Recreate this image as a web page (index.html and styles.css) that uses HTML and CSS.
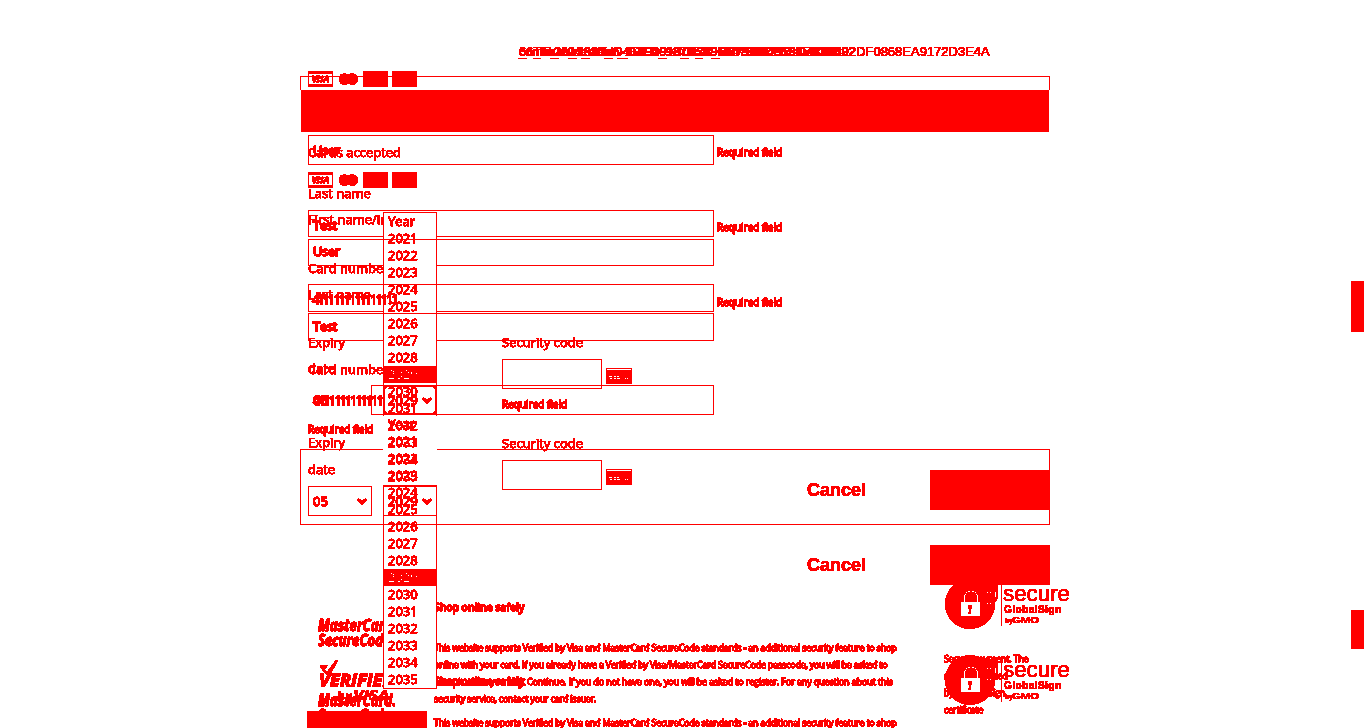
FILE: index.html
```
<!DOCTYPE html>
<html lang="en">
<head>
<meta charset="utf-8">
<title>Card payment</title>
<link rel="stylesheet" href="styles.css">
</head>
<body>
<svg class="defs" width="0" height="0">
  <filter id="ink" x="0" y="0" width="100%" height="100%" color-interpolation-filters="sRGB">
    <feComponentTransfer>
      <feFuncG type="discrete" tableValues="0 0 0 0 0 0 0 0 0 0 0 0 0 0 0 0 0 0 0 1"/>
      <feFuncB type="discrete" tableValues="0 0 0 0 0 0 0 0 0 0 0 0 0 0 0 0 0 0 0 1"/>
    </feComponentTransfer>
  </filter>
  <symbol id="cards" viewBox="0 0 109 16">
    <path d="M0 0h25v16H0zM1 3v10h23V3z" fill-rule="evenodd"/>
    <text x="4" y="11" class="visa-mark" textLength="17" lengthAdjust="spacingAndGlyphs">VISA</text>
    <circle cx="36.5" cy="8" r="5.6"/><circle cx="44.3" cy="8" r="5.6"/><path d="M38 3h5v10h-5z"/>
    <path d="M55 0h25v16H55zM84 0h25v16H84z"/>
  </symbol>
  <symbol id="cvv" viewBox="0 0 26 17">
    <rect width="26" height="16" rx="1"/>
    <path d="M1 1.5h24M3 8.500h3M8 8.500h2M11 8.500h2M4 10.500h2M8 10.500h2M11 10.500h3M19 10.500h1M21 10.500h1" stroke="#fff"/>
  </symbol>
  <symbol id="chevron" viewBox="0 0 10 7"><path d="M1 1.2l4 3.9 4-3.9" fill="none" stroke="#f00" stroke-width="2.2"/></symbol>
  <symbol id="seal" viewBox="0 0 128 52">
    <circle cx="26" cy="25" r="24.700"/>
    <path d="M38 4h16v13q0 5-6 7z"/>
    <path d="M43 13.500h1M46 13.500h1M43 24.500h1M46 24.500h1M51.500 13v5" stroke="#fff"/>
    <path d="M17 23h19v14H17z" fill="#fff"/>
    <path d="M20.500 23v-4c0-9.500 13-9.500 13 0v4" fill="none" stroke="#fff" stroke-width="1.500"/>
    <path d="M24 26h4v4h-1v5h-3v-2h1v-3h-1z"/>
    <path d="M57 5h1v42h-1z"/>
    <text x="59" y="22" class="seal-name" textLength="67" lengthAdjust="spacingAndGlyphs">secure</text>
    <text x="60" y="34" class="seal-brand" textLength="57">GlobalSign</text>
    <text x="61" y="44" class="seal-by" textLength="8">by</text>
    <text x="68" y="44" class="seal-gmo" textLength="27" lengthAdjust="spacingAndGlyphs">GMO</text>
  </symbol>
  <symbol id="securecode" viewBox="0 0 82 34">
    <text x="0" y="14.500" class="mark" textLength="78" lengthAdjust="spacingAndGlyphs">MasterCard.</text>
    <text x="0" y="29.500" class="mark" textLength="76" lengthAdjust="spacingAndGlyphs">SecureCode.</text>
  </symbol>
  <symbol id="verified" viewBox="0 0 82 44">
    <path d="M2 6l8-1-4 5 3 2 9-12h2L12 15H9L5 11z"/>
    <text x="1" y="26" class="mark" textLength="76" lengthAdjust="spacingAndGlyphs">VERIFIED</text>
    <text x="20" y="40" class="mark-by" textLength="14">by</text>
    <text x="35" y="40" class="mark-visa" textLength="36" lengthAdjust="spacingAndGlyphs">VISA</text>
  </symbol>
</svg>
<main class="stage">
  <section class="layer reference">
    <div class="token">_6_Ti_m_2681_6_D4E0910_0_C_0B7968D8594E93B492DF0868EA9172D3E4A</div>
    <div class="token second">continue-identifier_1DEC_937953CF7473834318950000</div>
    <div class="token third">6nTim2604_dentD4E29101C0837958D87942921D4335022</div>
  </section>
  <section class="layer frames">
    <div class="frame frame-top"></div>
    <div class="banner"></div>
    <div class="frame frame-bottom"></div>
  </section>
  <section class="layer fields">
    <div class="field f1">User</div>
    <div class="field f2">Test</div>
    <div class="field f3">User</div>
    <div class="field f4"></div>
    <div class="field f5">Test</div>
    <div class="field f6"></div>
  </section>
  <section class="layer labels">
    <svg class="card-logos logos1"><use href="#cards"/></svg>
    <div class="label l1">Cards accepted</div>
    <svg class="card-logos logos2"><use href="#cards"/></svg>
    <div class="label l2">Last name</div>
    <div class="label l3">First name/Initial</div>
    <div class="label l4">Card number</div>
    <div class="label l5">Last name</div>
    <div class="label l6">Expiry</div>
    <div class="label l7">Card number</div>
    <div class="label l8">date</div>
    <div class="value number n2">4111111111111111</div>
    <div class="value v05">05</div>
    <div class="required l9">Required field</div>
    <div class="label l10">Expiry</div>
    <div class="label l11">date</div>
    <div class="select month"><span>05</span><svg><use href="#chevron"/></svg></div>
  </section>
  <section class="layer hints">
    <div class="required">Required field</div>
    <div class="required">Required field</div>
    <div class="required">Required field</div>
  </section>
  <section class="layer security">
    <div class="label">Security code</div>
    <div class="code-row"><div class="code-box"></div><svg><use href="#cvv"/></svg></div>
    <div class="required">Required field</div>
    <div class="label again">Security code</div>
    <div class="code-row"><div class="code-box"></div><svg><use href="#cvv"/></svg></div>
  </section>
  <section class="layer actions">
    <div class="action-row"><span>Cancel</span><div class="button"></div></div>
    <div class="action-row"><span>Cancel</span><div class="button"></div></div>
  </section>
  <section class="layer brand-marks">
    <svg class="code-mark"><use href="#securecode"/></svg>
    <svg class="verified-mark"><use href="#verified"/></svg>
    <svg class="code-mark last"><use href="#securecode"/></svg>
    <div class="footer-block"></div>
  </section>
  <section class="layer copy">
    <h2>Shop online safely</h2>
    <p>This website supports Verified by Visa and MasterCard SecureCode standards - an additional security feature to shop<br>online with your card. If you already have a Verified by Visa/MasterCard SecureCode passcode, you will be asked to<br><span class="wide">enter it when you click Continue. If you do not have one, you will be asked to register. For any question about this</span><br>security service, contact your card issuer.</p>
    <p class="repeat">This website supports Verified by Visa and MasterCard SecureCode standards - an additional security feature to shop</p>
    <h2 class="shifted">Shop online safely</h2>
  </section>
  <section class="layer seals">
    <svg><use href="#seal"/></svg>
    <p>Secure payment. The<br>site is protected<br>by a GlobalSign<br>certificate</p>
    <svg class="seal2"><use href="#seal"/></svg>
  </section>
  <section class="menu menu-one">
    <ul><li>Year</li><li>2021</li><li>2022</li><li>2023</li><li>2024</li><li>2025</li><li>2026</li><li>2027</li><li>2028</li><li class="chosen">2029</li><li>2030</li><li>2031</li><li>2032</li><li>2033</li><li>2034</li><li>2035</li></ul>
  </section>
  <div class="select year open"><span>2029</span><svg><use href="#chevron"/></svg></div>
  <section class="menu menu-two">
    <ul><li>Year</li><li>2021</li><li>2022</li><li>2023</li><li>2024</li><li>2025</li><li>2026</li><li>2027</li><li>2028</li><li class="chosen">2029</li><li>2030</li><li>2031</li><li>2032</li><li>2033</li><li>2034</li><li>2035</li></ul>
  </section>
  <div class="select year lower"><span>2029</span><svg><use href="#chevron"/></svg></div>
  <div class="value number n1">4111111111111111</div>
  <svg class="by-visa" viewBox="0 0 54 14"><text x="0" y="11" class="mark-by" textLength="14">by</text><text x="15" y="12" class="mark-visa" textLength="36" lengthAdjust="spacingAndGlyphs">VISA</text></svg>
  <svg class="code-overlay"><use href="#securecode"/></svg>
  <aside class="layer scroll-marks"><div class="thumb"></div><div class="thumb short"></div></aside>
</main>
</body>
</html>
```
FILE: styles.css
```
* { box-sizing: border-box; }
body { margin: 0; background: #fff; color: #f00; font: 13px/18px "Open Sans", "Noto Sans", sans-serif; overflow: hidden; }
.defs { position: absolute; }
svg { display: block; fill: #f00; flex: none; }
.stage { position: relative; display: grid; grid-template: 728px / 1366px; width: 1366px; height: 728px; overflow: hidden; background: #fff; filter: url(#ink); }
.layer { grid-area: 1 / 1; display: flex; flex-direction: column; align-items: flex-start; min-height: 0; white-space: nowrap; }
.layer > * { flex: none; }

.reference { padding: 43px 0 0 519px; font: 13px/18px "Liberation Sans", Arial, sans-serif; -webkit-text-stroke: .2px #f00; }
.second, .third { margin-top: -18px; letter-spacing: -.2px; }

.frames { padding: 76px 0 0 300px; }
.frame { width: 750px; border: 1px solid #f00; border-radius: 1px; }
.frame-top { height: 14px; border-bottom: 0; }
.banner { width: 748px; height: 42px; margin-left: 1px; background: #f00; }
.frame-bottom { height: 76px; margin-top: 317px; border-radius: 0; }

.fields { padding: 135px 0 0 308px; }
.field { width: 406px; height: 28px; padding-left: 4px; border: 1px solid #f00; border-radius: 1.5px; line-height: 25px; letter-spacing: -.4px; -webkit-text-stroke: .7px #f00; }
.f1 { height: 30px; line-height: 29px; }
.f2 { height: 27px; margin-top: 45px; line-height: 29px; }
.f3 { height: 27px; margin-top: 2px; line-height: 23px; }
.f4 { margin-top: 18px; }
.f5 { margin-top: 1px; }
.f6 { width: 343px; height: 30px; margin: 44px 0 0 63px; border-radius: 0; }

.labels { padding: 71px 0 0 308px; }
.label { height: 18px; line-height: 18px; -webkit-text-stroke: .25px #f00; }
.labels .label, .security .label { transform: translateY(-1px); }
.required { font-size: 10px; height: 14px; line-height: 14px; -webkit-text-stroke: .6px #f00; }
.value { -webkit-text-stroke: .8px #f00; }
.number { letter-spacing: -2.15px; }
.card-logos { width: 109px; height: 16px; }
.l1 { margin-top: 57px; }
.logos2 { margin-top: 10px; }
.l2 { margin-top: -3px; }
.l3 { margin-top: 8px; }
.l4 { margin-top: 31px; }
.l5 { margin-top: 8px; }
.l6 { margin-top: 30px; }
.l7 { margin-top: 9px; }
.l8 { margin-top: -19px; }
.n2, .v05 { margin: 13px 0 0 5px; }
.v05 { margin-top: -18px; }
.l9 { margin-top: 13px; }
.l10 { margin-top: -2px; }
.labels .l11 { margin-top: 8px; transform: none; }
.select { display: flex; align-items: center; justify-content: space-between; height: 30px; padding: 0 4px; border: 1px solid #f00; border-radius: 1.5px; -webkit-text-stroke: .6px #f00; }
.select svg { width: 10px; height: 7px; }
.month { width: 64px; margin-top: 8px; }

.hints { padding: 145px 0 0 717px; gap: 61px; }
.security { padding: 334px 0 0 502px; }
.code-row { display: flex; align-items: center; gap: 4px; margin-top: 7px; }
.code-box { width: 100px; height: 30px; border: 1px solid #f00; border-radius: 1.5px; }
.code-row svg { width: 26px; height: 17px; margin-top: 5px; }
.security .required { margin-top: 8px; }
.again { margin-top: 24px; }

.actions { padding: 470px 0 0 807px; gap: 35px; font: bold 18px/40px "Liberation Sans", Arial, sans-serif; }
.action-row { display: flex; justify-content: space-between; width: 243px; height: 40px; }
.button { width: 120px; height: 40px; background: #f00; border-radius: 1.5px; }

.brand-marks { padding: 616px 0 0 318px; }
.code-mark, .code-overlay { width: 82px; height: 34px; }
.verified-mark { width: 82px; height: 44px; margin-top: 10px; }
.last { margin-top: -13px; }
.footer-block { width: 120px; height: 17px; margin: -14px 0 0 -11px; background: #f00; }
.mark { font: italic bold 16px "Open Sans", sans-serif; stroke: #f00; stroke-width: .5px; }
.mark-by { font: bold 10px "Open Sans", sans-serif; }
.mark-visa { font: italic bold 15px "Open Sans", sans-serif; }
.visa-mark { font: italic bold 8px "Open Sans", sans-serif; stroke: #f00; stroke-width: .4px; }

.copy { padding: 598px 0 0 434px; font-size: 9px; line-height: 17px; letter-spacing: -.23px; -webkit-text-stroke: .65px #f00; }
.copy h2 { margin: 0; font-size: 10.5px; line-height: 18px; font-weight: 600; letter-spacing: -.1px; }
.copy p { margin: 23px 0 0; }
.copy .repeat { margin-top: 7px; }
.copy .shifted { margin-top: -59px; }
.wide { letter-spacing: -.13px; }

.seals { padding: 579px 0 0 944px; }
.seals svg { width: 128px; height: 52px; }
.seals p { margin: 19px 0 0; font-size: 9px; line-height: 17px; letter-spacing: -.2px; -webkit-text-stroke: .65px #f00; }
.seals .seal2 { margin-top: -63px; }
.seal-name { font: 22px "Liberation Sans", Arial, sans-serif; }
.seal-brand { font: bold 10px "Liberation Sans", Arial, sans-serif; }
.seal-by { font: bold 7px "Liberation Sans", Arial, sans-serif; }
.seal-gmo { font: bold 9px "Liberation Sans", Arial, sans-serif; }

/* Menus drop over the form and the text below it. */
.menu { position: absolute; left: 383px; width: 54px; }
.menu ul { margin: 0; padding: 1px 0 0; list-style: none; }
.menu li { height: 17px; padding-left: 5px; line-height: 17px; -webkit-text-stroke: .3px #f00; }
.menu .chosen { color: #fff; background: #f00; -webkit-text-stroke: 0; }
.menu-one { top: 212px; height: 274px; background: linear-gradient(#f00, #f00) 0 0 / 1px 204px no-repeat, linear-gradient(#f00, #f00) 53px 0 / 1px 204px no-repeat, linear-gradient(#f00, #f00) 0 0 / 54px 1px no-repeat, linear-gradient(#f00, #f00) 0 27px / 54px 1px no-repeat, linear-gradient(#f00, #f00) 0 72px / 54px 1px no-repeat, linear-gradient(#f00, #f00) 0 101px / 54px 1px no-repeat, #fff; }
.menu-two { top: 415px; height: 274px; background: linear-gradient(#f00, #f00) 0 100% / 1px 204px no-repeat, linear-gradient(#f00, #f00) 53px 100% / 1px 204px no-repeat, linear-gradient(#f00, #f00) 0 100% / 54px 1px no-repeat, linear-gradient(#f00, #f00) 0 109px / 54px 1px no-repeat, linear-gradient(#fff, #fff) 0 71px / 54px 203px no-repeat; }
.year { position: absolute; left: 383px; width: 54px; }
.open { top: 385px; border-width: 2px; border-radius: 4px; padding: 0 3px; }
.lower { top: 485px; height: 31px; border-top-width: 2px; }
.n1 { position: absolute; left: 312px; top: 290px; }
.by-visa { position: absolute; left: 338px; top: 688px; width: 54px; height: 14px; clip-path: inset(1px 0 0 0); }
.code-overlay { position: absolute; left: 318px; top: 691px; clip-path: inset(0 0 14px 0); }

.scroll-marks { padding: 281px 0 0 1351px; }
.thumb { width: 13px; height: 51px; background: #f00; }
.short { height: 39px; margin-top: 278px; }
```
